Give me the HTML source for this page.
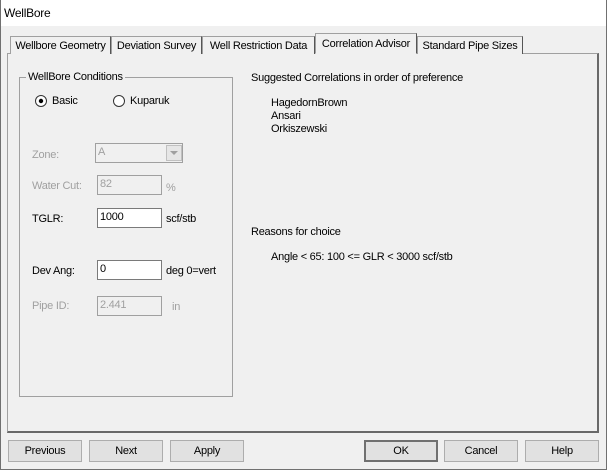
<!DOCTYPE html>
<html><head><style>
*{box-sizing:border-box;margin:0;padding:0}
body{width:607px;height:470px;background:#f0f0f0;font-family:"Liberation Sans",sans-serif;font-size:11px;letter-spacing:-0.25px;color:#000;position:relative;overflow:hidden}
div{white-space:nowrap}
.a{position:absolute}
.dis{color:#a0a0a0}
.tab{position:absolute;top:36px;height:18px;border:1px solid #a0a0a0;border-bottom:none;border-right:1px solid #555;background:#f0f0f0;padding:3px 0 0;text-align:center;overflow:hidden}
.inp{position:absolute;height:20px;border:1px solid #7a7a7a;background:#fff;padding:2px 2px;overflow:hidden}
.inp.d{background:#f0f0f0;border-color:#a0a0a0;color:#a0a0a0}
.btn{position:absolute;top:440px;height:22px;width:74px;border:1px solid #adadad;background:#e1e1e1;text-align:center;line-height:20px}
</style></head><body>
<div class="a" style="left:0;top:0;width:607px;height:26px;background:#fff"></div>
<div class="a" style="left:4px;top:6px;font-size:12px">WellBore</div>
<div class="a" style="left:0;top:0;width:607px;height:470px;border:1px solid #707070;border-top:none"></div>
<div class="a" style="left:7px;top:53px;width:592px;height:380px;border:1px solid #a0a0a0;border-right:2px solid #696969;border-bottom:2px solid #696969"></div>
<div class="tab" style="left:10px;width:101px">Wellbore Geometry</div>
<div class="tab" style="left:111px;width:91px">Deviation Survey</div>
<div class="tab" style="left:202px;width:113px">Well Restriction Data</div>
<div class="tab" style="left:315px;top:33px;height:21px;width:102px;border-bottom:1px solid #f0f0f0;padding-top:4px">Correlation Advisor</div>
<div class="tab" style="left:417px;width:106px">Standard Pipe Sizes</div>
<div class="a" style="left:19px;top:77px;width:214px;height:320px;border:1px solid #a0a0a0"></div>
<div class="a" style="left:26px;top:71px;background:#f0f0f0;padding:0 2px">WellBore Conditions</div>
<svg class="a" style="left:35px;top:95px" width="12" height="12"><circle cx="6" cy="6" r="5.5" fill="#fff" stroke="#333"/><circle cx="6" cy="6" r="2.2" fill="#000"/></svg>
<div class="a" style="left:52px;top:95px">Basic</div>
<svg class="a" style="left:113px;top:95px" width="12" height="12"><circle cx="6" cy="6" r="5.5" fill="#fff" stroke="#333"/></svg>
<div class="a" style="left:130px;top:95px">Kuparuk</div>
<div class="a dis" style="left:32px;top:149px">Zone:</div>
<div class="inp d" style="left:95px;top:143px;width:88px">A</div>
<div class="a" style="left:166px;top:145px;width:16px;height:16px;border:1px solid #c0c0c0;background:#e6e6e6"></div>
<svg class="a" style="left:169px;top:151px" width="10" height="5"><path d="M1 0h8L5 4z" fill="#a0a0a0"/></svg>
<div class="a dis" style="left:32px;top:180px">Water Cut:</div>
<div class="inp d" style="left:97px;top:175px;width:65px">82</div>
<div class="a dis" style="left:166px;top:182px">%</div>
<div class="a" style="left:32px;top:213px">TGLR:</div>
<div class="inp" style="left:97px;top:208px;width:65px">1000</div>
<div class="a" style="left:166px;top:213px">scf/stb</div>
<div class="a" style="left:32px;top:265px">Dev Ang:</div>
<div class="inp" style="left:97px;top:260px;width:65px">0</div>
<div class="a" style="left:166px;top:265px">deg 0=vert</div>
<div class="a dis" style="left:32px;top:300px">Pipe ID:</div>
<div class="inp d" style="left:97px;top:296px;width:65px">2.441</div>
<div class="a dis" style="left:172px;top:301px">in</div>
<div class="a" style="left:251px;top:72px">Suggested Correlations in order of preference</div>
<div class="a" style="left:271px;top:97px;line-height:13px">HagedornBrown<br>Ansari<br>Orkiszewski</div>
<div class="a" style="left:251px;top:226px">Reasons for choice</div>
<div class="a" style="left:271px;top:251px">Angle &lt; 65: 100 &lt;= GLR &lt; 3000 scf/stb</div>
<div class="btn" style="left:8px">Previous</div>
<div class="btn" style="left:89px">Next</div>
<div class="btn" style="left:170px">Apply</div>
<div class="btn" style="left:364px;border:2px solid #707070;line-height:18px">OK</div>
<div class="btn" style="left:444px">Cancel</div>
<div class="btn" style="left:525px">Help</div>
</body></html>
